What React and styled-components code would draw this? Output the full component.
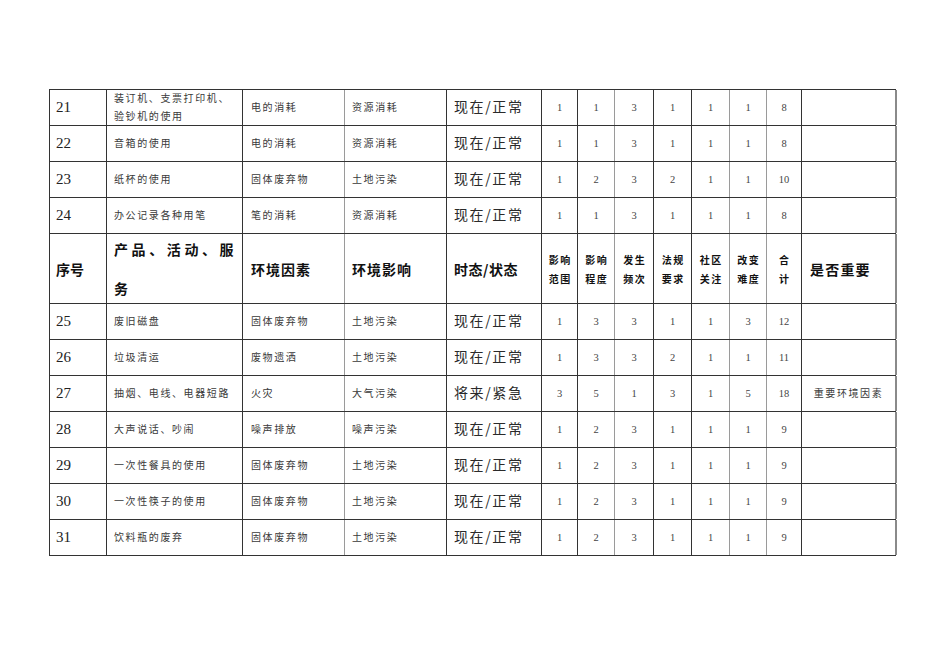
import styled, { createGlobalStyle } from "styled-components";

const GlobalStyle = createGlobalStyle`
  html, body {
    margin: 0;
    padding: 0;
    background: #fff;
  }
`;

const COLS = [57, 136, 102, 102, 95, 36, 37, 39, 38, 38, 37, 35, 95];
// vertical line colour after each column
const LINES = [
  "#333", "#333", "#9a9a9a", "#333", "#333", "#333", "#9a9a9a",
  "#333", "#333", "#9a9a9a", "#9a9a9a", "#333", "#8a8a8a",
];

const Page = styled.div`
  padding: 89px 0 0 49px;
  width: 950px;
  height: 672px;
  box-sizing: border-box;
`;

const Table = styled.div`
  width: ${COLS.reduce((a, b) => a + b, 0)}px;
  border-top: 1px solid #333;
  border-left: 1px solid #333;
  box-sizing: border-box;
`;

const Row = styled.div`
  display: grid;
  grid-template-columns: ${COLS.map((c) => c + "px").join(" ")};
  height: ${(p) => p.$h || 36}px;
  border-bottom: 1px solid #333;
  box-sizing: border-box;
`;

const Cell = styled.div`
  display: flex;
  align-items: center;
  justify-content: ${(p) => (p.$center ? "center" : "flex-start")};
  padding-left: ${(p) => (p.$center ? 0 : p.$pl ?? 7)}px;
  border-right: ${(p) => (p.$last ? 2 : 1)}px solid ${(p) => p.$line};
  box-sizing: border-box;
  overflow: hidden;
`;

const Num = styled.span`
  font-family: "Liberation Serif", serif;
  font-size: 15px;
  color: #222;
`;

const Small = styled.span`
  font-family: "Liberation Serif", "Noto Sans CJK SC", serif;
  font-size: 10px;
  letter-spacing: 1.6px;
  line-height: 18px;
  color: #3a3a3a;
`;

const State = styled.span`
  font-family: "Noto Sans CJK SC", sans-serif;
  font-size: 14px;
  letter-spacing: 1.6px;
  line-height: 1;
  margin-top: -3px;
  color: #2a2a2a;
`;

const Score = styled.span`
  font-family: "Liberation Serif", serif;
  font-size: 10.5px;
  color: #444;
`;

const Head = styled.span`
  font-family: "Noto Sans CJK SC", sans-serif;
  font-weight: 700;
  font-size: 14px;
  letter-spacing: ${(p) => p.$ls ?? 1}px;
  line-height: ${(p) => p.$lh || 20}px;
  color: #111;
`;

const SubHead = styled.span`
  font-family: "Noto Sans CJK SC", sans-serif;
  font-weight: 700;
  font-size: 10px;
  letter-spacing: 1.5px;
  line-height: 19px;
  text-align: center;
  color: #111;
  margin-left: 1.5px;
`;

const rowsTop = [
  ["21", "装订机、支票打印机、\n验钞机的使用", "电的消耗", "资源消耗", "现在/正常", [1, 1, 3, 1, 1, 1, 8], ""],
  ["22", "音箱的使用", "电的消耗", "资源消耗", "现在/正常", [1, 1, 3, 1, 1, 1, 8], ""],
  ["23", "纸杯的使用", "固体废弃物", "土地污染", "现在/正常", [1, 2, 3, 2, 1, 1, 10], ""],
  ["24", "办公记录各种用笔", "笔的消耗", "资源消耗", "现在/正常", [1, 1, 3, 1, 1, 1, 8], ""],
];

const rowsBottom = [
  ["25", "废旧磁盘", "固体废弃物", "土地污染", "现在/正常", [1, 3, 3, 1, 1, 3, 12], ""],
  ["26", "垃圾清运", "废物遗洒", "土地污染", "现在/正常", [1, 3, 3, 2, 1, 1, 11], ""],
  ["27", "抽烟、电线、电器短路", "火灾", "大气污染", "将来/紧急", [3, 5, 1, 3, 1, 5, 18], "重要环境因素"],
  ["28", "大声说话、吵闹", "噪声排放", "噪声污染", "现在/正常", [1, 2, 3, 1, 1, 1, 9], ""],
  ["29", "一次性餐具的使用", "固体废弃物", "土地污染", "现在/正常", [1, 2, 3, 1, 1, 1, 9], ""],
  ["30", "一次性筷子的使用", "固体废弃物", "土地污染", "现在/正常", [1, 2, 3, 1, 1, 1, 9], ""],
  ["31", "饮料瓶的废弃", "固体废弃物", "土地污染", "现在/正常", [1, 2, 3, 1, 1, 1, 9], ""],
];

const scoreHeads = ["影响\n范围", "影响\n程度", "发生\n频次", "法规\n要求", "社区\n关注", "改变\n难度", "合\n计"];

const lines = (t) =>
  t.split("\n").map((l, i) => (
    <span key={i}>
      {i > 0 && <br />}
      {l}
    </span>
  ));

const DataRow = ({ r }) => (
  <Row>
    <Cell $line={LINES[0]} $pl={6}>
      <Num>{r[0]}</Num>
    </Cell>
    <Cell $line={LINES[1]}>
      <Small>{lines(r[1])}</Small>
    </Cell>
    <Cell $line={LINES[2]} $pl={8}>
      <Small>{r[2]}</Small>
    </Cell>
    <Cell $line={LINES[3]}>
      <Small>{r[3]}</Small>
    </Cell>
    <Cell $line={LINES[4]}>
      <State>{r[4]}</State>
    </Cell>
    {r[5].map((s, i) => (
      <Cell key={i} $center $line={LINES[5 + i]}>
        <Score>{s}</Score>
      </Cell>
    ))}
    <Cell $center $last $line={LINES[12]}>
      <Small>{r[6]}</Small>
    </Cell>
  </Row>
);

const HeaderRow = () => (
  <Row $h={70}>
    <Cell $line={LINES[0]} $pl={6}>
      <Head $ls={0}>序号</Head>
    </Cell>
    <Cell $line={LINES[1]}>
      <Head $ls={3.6} $lh={39}>
        产品、活动、服
        <br />
        务
      </Head>
    </Cell>
    <Cell $line={LINES[2]} $pl={8}>
      <Head>环境因素</Head>
    </Cell>
    <Cell $line={LINES[3]}>
      <Head>环境影响</Head>
    </Cell>
    <Cell $line={LINES[4]}>
      <Head $ls={0.5}>时态/状态</Head>
    </Cell>
    {scoreHeads.map((h, i) => (
      <Cell key={i} $center $line={LINES[5 + i]}>
        <SubHead>{lines(h)}</SubHead>
      </Cell>
    ))}
    <Cell $last $line={LINES[12]} $pl={8}>
      <Head $ls={1.2}>是否重要</Head>
    </Cell>
  </Row>
);

export default function App() {
  return (
    <Page>
      <GlobalStyle />
      <Table>
        {rowsTop.map((r) => (
          <DataRow key={r[0]} r={r} />
        ))}
        <HeaderRow />
        {rowsBottom.map((r) => (
          <DataRow key={r[0]} r={r} />
        ))}
      </Table>
    </Page>
  );
}
